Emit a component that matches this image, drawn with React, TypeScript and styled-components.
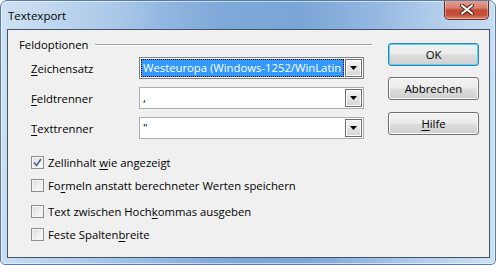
import React from "react"
import styled, { createGlobalStyle } from "styled-components"

const GlobalStyle = createGlobalStyle`
    html, body {
        margin: 0;
        padding: 0;
        background: #ffffff;
    }
    body {
        font-family: "Open Sans", "Liberation Sans", sans-serif;
        font-size: 11.3px;
        color: #000;
    }
`

const Frame = styled.div`
    box-sizing: border-box;
    width: 496px;
    height: 265px;
    display: flex;
    flex-direction: column;
    border: 1px solid #5c7ba3;
    border-radius: 7px 7px 5px 5px;
    background:
        linear-gradient(100deg, rgba(255,255,255,0.35) 0%, rgba(255,255,255,0) 30%, rgba(255,255,255,0) 70%, rgba(255,255,255,0.3) 100%),
        linear-gradient(90deg, #b6d1ed 0%, #9fc1e6 25%, #7ea8d8 45%, #7aa5d6 60%, #a3c3e7 85%, #b9d3ee 100%);
    box-shadow: inset 0 0 0 1px rgba(255,255,255,0.55);
    overflow: hidden;
`

const TitleBar = styled.div`
    height: 28px;
    display: flex;
    align-items: flex-start;
    padding-left: 7px;
    padding-right: 6px;
`

const Title = styled.div`
    font-size: 11.5px;
    line-height: 14px;
    margin-top: 8px;
    color: #000;
`

const CloseButton = styled.div`
    margin-left: auto;
    margin-top: -1px;
    box-sizing: border-box;
    width: 45px;
    height: 20px;
    border: 1px solid #6b2a24;
    border-top: none;
    border-radius: 0 0 5px 5px;
    background: linear-gradient(180deg, #e5a395 0%, #d8806f 40%, #c24a33 55%, #c6523b 80%, #dc8a74 100%);
    box-shadow: inset 0 0 0 1px rgba(255,255,255,0.35);
    display: flex;
    align-items: center;
    justify-content: center;
`

const Client = styled.div`
    flex: 1;
    margin: 0 5px 6px 6px;
    border: 1px solid #44546a;
    background: #f0f0f0;
    display: flex;
    padding: 6px 0 0 11px;
`

const Group = styled.div`
    width: 353px;
    display: flex;
    flex-direction: column;
`

const GroupHeader = styled.div`
    display: flex;
    align-items: center;
    height: 16px;
`

const GroupTitle = styled.span`
    padding-right: 6px;
    white-space: nowrap;
`

const GroupLine = styled.div`
    flex: 1;
    border-top: 1px solid #a0a0a0;
    border-bottom: 1px solid #ffffff;
    margin-top: 1px;
`

const FieldList = styled.div`
    display: flex;
    flex-direction: column;
    gap: 8px;
    margin-top: 5px;
    padding-left: 12px;
`

const FieldRow = styled.div`
    display: flex;
    align-items: center;
    height: 22px;
`

const Label = styled.span`
    width: 108px;
`

const Combo = styled.div<{ $focused?: boolean }>`
    box-sizing: border-box;
    width: 225px;
    height: 22px;
    border: 1px solid ${p => (p.$focused ? "#7e7e7e" : "#abadb3")};
    background: #ffffff;
    display: flex;
    align-items: center;
    padding: 1px;
`

const ComboValue = styled.div<{ $selected?: boolean }>`
    flex: 1;
    height: 100%;
    box-sizing: border-box;
    overflow: hidden;
    white-space: nowrap;
    padding-left: 2px;
    line-height: 18px;
    color: ${p => (p.$selected ? "#ffffff" : "#000000")};
    background: ${p => (p.$selected ? "#3399ff" : "transparent")};
    outline: ${p => (p.$selected ? "1px dotted #000" : "none")};
    outline-offset: -1px;
`

const DropButton = styled.div`
    box-sizing: border-box;
    width: 17px;
    height: 18px;
    margin-left: 1px;
    border: 1px solid #6e6e6e;
    background: linear-gradient(180deg, #f4f4f4 0%, #e6e6e6 50%, #d4d4d4 100%);
    box-shadow: inset 0 0 0 1px #ffffff;
    display: flex;
    align-items: center;
    justify-content: center;
`

const CheckList = styled.div`
    display: flex;
    flex-direction: column;
    padding-left: 12px;
`

const CheckRow = styled.div<{ $top: number }>`
    display: flex;
    align-items: center;
    height: 16px;
    margin-top: ${p => p.$top}px;
    gap: 4px;
`

const Box = styled.div`
    box-sizing: border-box;
    width: 13px;
    height: 13px;
    border: 1px solid #8e8f8f;
    background: linear-gradient(135deg, #dcdcdc 0%, #f0f0f0 60%, #fbfbfb 100%);
    box-shadow: inset 0 0 0 1px #f4f4f4;
    display: flex;
    align-items: center;
    justify-content: center;
`

const ButtonColumn = styled.div`
    display: flex;
    flex-direction: column;
    margin-left: 16px;
    margin-top: 7px;
`

const Button = styled.div<{ $default?: boolean; $top: number }>`
    box-sizing: border-box;
    width: 91px;
    height: 23px;
    margin-top: ${p => p.$top}px;
    border: 1px solid ${p => (p.$default ? "#3c7fb1" : "#707070")};
    border-radius: 3px;
    background: linear-gradient(180deg, #f2f2f2 0%, #ebebeb 48%, #dddddd 52%, #cfcfcf 100%);
    box-shadow: inset 0 0 0 1px ${p => (p.$default ? "#48d8fb" : "#fcfcfc")};
    display: flex;
    align-items: center;
    justify-content: center;
`

const Key = styled.span`
    text-decoration: underline;
    text-underline-offset: 2px;
`

const Arrow = () => (
    <svg width="7" height="4" viewBox="0 0 7 4">
        <path d="M0 0H7L3.5 4Z" fill="#000" />
    </svg>
)

const Check = () => (
    <svg width="9" height="9" viewBox="0 0 9 9">
        <path d="M1 4.5L3.5 7.5L8 1" fill="none" stroke="#4a5f97" strokeWidth="1.6" />
    </svg>
)

const CloseGlyph = () => (
    <svg width="14" height="11" viewBox="0 0 14 11">
        <path d="M2 1.5L12 9.5M12 1.5L2 9.5" stroke="#4b1d17" strokeWidth="4" strokeLinecap="round" />
        <path d="M2 1.5L12 9.5M12 1.5L2 9.5" stroke="#ffffff" strokeWidth="2.2" strokeLinecap="round" />
    </svg>
)

const fields = [
    { key: "Z", rest: "eichensatz", value: "Westeuropa (Windows-1252/WinLatin", focused: true },
    { key: "F", rest: "eldtrenner", value: ",", focused: false },
    { key: "T", rest: "exttrenner", value: "\"", focused: false },
]

export default function App() {
    return (
        <>
            <GlobalStyle />
            <Frame>
                <TitleBar>
                    <Title>Textexport</Title>
                    <CloseButton><CloseGlyph /></CloseButton>
                </TitleBar>
                <Client>
                    <Group>
                        <GroupHeader>
                            <GroupTitle>Feldoptionen</GroupTitle>
                            <GroupLine />
                        </GroupHeader>
                        <FieldList>
                            {fields.map(f => (
                                <FieldRow key={f.key}>
                                    <Label><Key>{f.key}</Key>{f.rest}</Label>
                                    <Combo $focused={f.focused}>
                                        <ComboValue $selected={f.focused}>{f.value}</ComboValue>
                                        <DropButton><Arrow /></DropButton>
                                    </Combo>
                                </FieldRow>
                            ))}
                        </FieldList>
                        <CheckList>
                            <CheckRow $top={15}>
                                <Box><Check /></Box>
                                <span>Zellinhalt <Key>w</Key>ie angezeigt</span>
                            </CheckRow>
                            <CheckRow $top={7}>
                                <Box />
                                <span>Fo<Key>r</Key>meln anstatt berechneter Werten speichern</span>
                            </CheckRow>
                            <CheckRow $top={10}>
                                <Box />
                                <span>Text zwischen Hoch<Key>k</Key>ommas ausgeben</span>
                            </CheckRow>
                            <CheckRow $top={7}>
                                <Box />
                                <span>Feste Spalten<Key>b</Key>reite</span>
                            </CheckRow>
                        </CheckList>
                    </Group>
                    <ButtonColumn>
                        <Button $default $top={0}>OK</Button>
                        <Button $top={11}>Abbrechen</Button>
                        <Button $top={12}><span><Key>H</Key>ilfe</span></Button>
                    </ButtonColumn>
                </Client>
            </Frame>
        </>
    )
}
